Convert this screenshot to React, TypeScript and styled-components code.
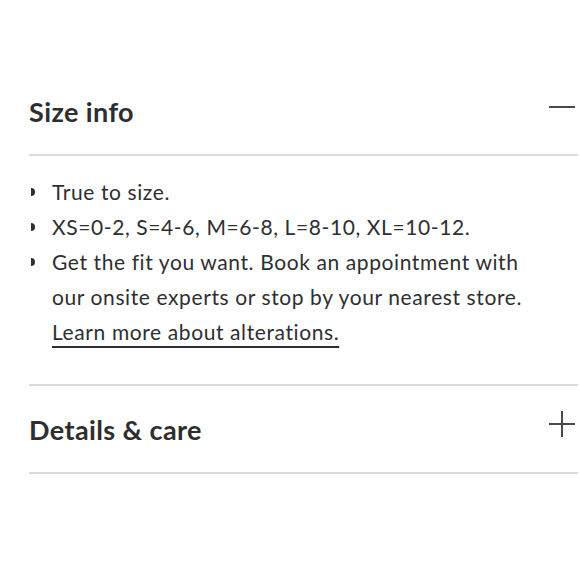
import styled, { createGlobalStyle } from 'styled-components';

const GlobalStyle = createGlobalStyle`
    html, body {
        margin: 0;
        padding: 0;
        background: #ffffff;
    }
    body {
        font-family: Lato, "Open Sans", sans-serif;
        color: #2e2f32;
    }
`;

interface ItemProps {
    title: string;
    open?: boolean;
    children?: React.ReactNode;
    headHeight: number;
}

const AccordionItem: React.FunctionComponent<ItemProps> = (props) => {
    const { title, open, children, headHeight } = props;
    return (
        <Style.Item>
            <Style.Header $height={headHeight} $open={!!open}>
                <Style.Title>{title}</Style.Title>
                <Style.Toggle aria-label={open ? 'Collapse' : 'Expand'}>
                    <svg width="28" height="28" viewBox="0 0 28 28">
                        <line x1="1" y1="14" x2="27" y2="14" stroke="#4a4a4c" strokeWidth="2" />
                        {!open && <line x1="14" y1="1" x2="14" y2="27" stroke="#4a4a4c" strokeWidth="2" />}
                    </svg>
                </Style.Toggle>
            </Style.Header>
            {open && <Style.Body>{children}</Style.Body>}
        </Style.Item>
    );
};

const App: React.FunctionComponent = () => {
    return (
        <>
            <GlobalStyle />
            <Style.Page>
                <AccordionItem title="Size info" open headHeight={85}>
                    <Style.List>
                        <Style.Bullet>True to size.</Style.Bullet>
                        <Style.Bullet>XS=0-2, S=4-6, M=6-8, L=8-10, XL=10-12.</Style.Bullet>
                        <Style.Bullet>
                            Get the fit you want. Book an appointment with
                            <br />
                            our onsite experts or stop by your nearest store.
                            <br />
                            <Style.Link href="#">Learn more about alterations.</Style.Link>
                        </Style.Bullet>
                    </Style.List>
                </AccordionItem>
                <AccordionItem title="Details & care" headHeight={86} />
            </Style.Page>
        </>
    );
};

const Style = {
    Page: styled.div`
        padding: 69px 2px 0 29px;
    `,
    Item: styled.section`
        border-bottom: 2px solid #dadada;
    `,
    Header: styled.div<{ $height: number; $open: boolean }>`
        height: ${(p) => p.$height}px;
        display: flex;
        align-items: center;
        justify-content: space-between;
        border-bottom: ${(p) => (p.$open ? '2px solid #dadada' : 'none')};
    `,
    Title: styled.h2`
        margin: 0;
        font-size: 27px;
        font-weight: 700;
        color: #2e2e30;
        letter-spacing: 0.4px;
    `,
    Toggle: styled.button`
        border: none;
        background: none;
        padding: 0;
        margin-right: 2px;
        margin-bottom: 10px;
        display: flex;
        cursor: pointer;
    `,
    Body: styled.div`
        padding: 18px 0 35px;
    `,
    List: styled.ul`
        margin: 0;
        padding: 0 0 0 23px;
        list-style: none;
    `,
    Bullet: styled.li`
        position: relative;
        font-size: 21px;
        line-height: 35px;
        letter-spacing: 0.6px;
        color: #2e2f32;
        white-space: nowrap;
        &::before {
            content: '';
            position: absolute;
            left: -21px;
            top: 14px;
            width: 4px;
            height: 8px;
            background: #2e2f32;
            border-radius: 0 4px 4px 0;
        }
    `,
    Link: styled.a`
        color: #2e2f32;
        text-decoration: underline;
        text-underline-offset: 6px;
        text-decoration-thickness: 1.5px;
    `,
};

export default App;
